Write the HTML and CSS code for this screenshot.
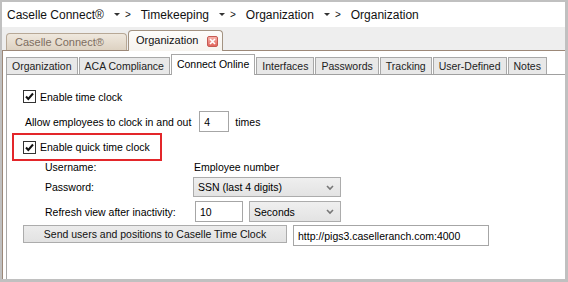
FILE: index.html
```html
<!DOCTYPE html>
<html lang="en">
<head>
    <meta charset="UTF-8">
    <meta name="viewport" content="width=device-width, initial-scale=1.0">
    <title>Organization</title>
    <link rel="stylesheet" href="styles.css">
</head>
<body>
    <div class="frame">
        <div class="crumbs">
            <span class="crumb">Caselle Connect®</span><span class="dd"></span><span class="sep">&gt;</span>
            <span class="crumb">Timekeeping</span><span class="dd"></span><span class="sep">&gt;</span>
            <span class="crumb">Organization</span><span class="dd"></span><span class="sep">&gt;</span>
            <span class="crumb">Organization</span>
        </div>

        <div class="doctabs">
            <div class="doctab">Caselle Connect®</div>
            <div class="doctab active">
                Organization
                <span class="close">
                    <svg width="9" height="9" viewBox="0 0 9 9"><path d="M2 2 L7 7 M7 2 L2 7" stroke="#fff" stroke-width="1.6"/></svg>
                </span>
            </div>
        </div>

        <div class="pane">
            <div class="tabs">
                <div class="tab">Organization</div>
                <div class="tab">ACA Compliance</div>
                <div class="tab active">Connect Online</div>
                <div class="tab">Interfaces</div>
                <div class="tab">Passwords</div>
                <div class="tab">Tracking</div>
                <div class="tab">User-Defined</div>
                <div class="tab">Notes</div>
            </div>

            <div class="page">
                <label class="check-row">
                    <span class="box"><svg width="11" height="11" viewBox="0 0 11 11"><path d="M2 5.5 L4.3 8 L9 2.5" fill="none" stroke="#111" stroke-width="2"/></svg></span>
                    Enable time clock
                </label>

                <div class="count-row">
                    <span>Allow employees to clock in and out</span>
                    <span class="input count">4</span>
                    <span class="times">times</span>
                </div>

                <div class="highlight">
                    <label class="check-row">
                        <span class="box"><svg width="11" height="11" viewBox="0 0 11 11"><path d="M2 5.5 L4.3 8 L9 2.5" fill="none" stroke="#111" stroke-width="2"/></svg></span>
                        Enable quick time clock
                    </label>
                </div>

                <div class="fields">
                    <span class="label">Username:</span>
                    <span class="value">Employee number</span>

                    <span class="label">Password:</span>
                    <span class="select wide">SSN (last 4 digits)<svg class="chev" width="8" height="6" viewBox="0 0 8 6"><path d="M1 1 L4 4 L7 1" fill="none" stroke="#777" stroke-width="1.6"/></svg></span>

                    <span class="label">Refresh view after inactivity:</span>
                    <span class="pair">
                        <span class="input mins">10</span>
                        <span class="select unit">Seconds<svg class="chev" width="8" height="6" viewBox="0 0 8 6"><path d="M1 1 L4 4 L7 1" fill="none" stroke="#777" stroke-width="1.6"/></svg></span>
                    </span>
                </div>

                <div class="send-row">
                    <button class="send">Send users and positions to Caselle Time Clock</button>
                    <span class="input url">http://pigs3.caselleranch.com:4000</span>
                </div>
            </div>
        </div>
    </div>
</body>
</html>
```

FILE: styles.css
```css
* {
    box-sizing: border-box;
    margin: 0;
    padding: 0;
}
body {
    font-family: "Liberation Sans", Arial, sans-serif;
    font-size: 10.5px;
    color: #000;
    background: #fff;
}
.frame {
    width: 568px;
    height: 282px;
    display: flex;
    flex-direction: column;
    border-style: solid;
    border-color: #c0c0c0;
    border-width: 2px 3px 3px 2px;
    background: #fff;
}

/* breadcrumb */
.crumbs {
    height: 25px;
    display: flex;
    align-items: center;
    padding-left: 5px;
    font-size: 12px;
    color: #111;
}
.dd {
    width: 0;
    height: 0;
    margin-left: 10px;
    border-left: 3px solid transparent;
    border-right: 3px solid transparent;
    border-top: 3px solid #333;
}
.sep {
    font-size: 10px;
    margin-left: 5px;
    margin-right: 10px;
}

/* document tabs */
.doctabs {
    height: 24px;
    display: flex;
    align-items: flex-end;
    padding-left: 4px;
    background: #eeeeee;
    border-bottom: 1px solid #9c8878;
}
.doctab {
    width: 121px;
    height: 17px;
    padding-left: 8px;
    font-size: 11px;
    line-height: 16px;
    white-space: nowrap;
    color: #7d6d60;
    border: 1px solid #b7a896;
    border-bottom: none;
    border-radius: 4px 4px 0 0;
    background: linear-gradient(#efe8de, #ddd2c2);
}
.doctab.active {
    position: relative;
    width: 95px;
    height: 21px;
    margin-left: 1px;
    margin-bottom: -1px;
    padding-left: 7px;
    line-height: 19px;
    color: #111;
    border-color: #a39382;
    background: linear-gradient(#fdfcfa, #f6f3ee);
}
.close {
    position: absolute;
    left: 78px;
    top: 5px;
    width: 11px;
    height: 11px;
    display: flex;
    align-items: center;
    justify-content: center;
    border: 1px solid #c65a52;
    border-radius: 2px;
    background: linear-gradient(#f7b2aa, #e2665c);
}

/* inner tab control */
.pane {
    flex: 1;
    display: flex;
    flex-direction: column;
    border-left: 1px solid #9c8878;
    padding-left: 3px;
}
.tabs {
    height: 24px;
    display: flex;
    align-items: flex-end;
    gap: 1px;
    border-bottom: 1px solid #a0a0a0;
}
.tab {
    flex-shrink: 0;
    height: 17px;
    padding: 0 5px;
    line-height: 16px;
    white-space: nowrap;
    color: #222;
    background: #e8e8e8;
    border: 1px solid #a8a8a8;
    border-bottom: none;
}
.tab.active {
    height: 21px;
    margin-bottom: -1px;
    line-height: 18px;
    background: #fff;
    color: #000;
}
.page {
    flex: 1;
    border-left: 1px solid #a8a8a8;
    padding: 15px 0 0 16px;
}

.check-row {
    height: 13px;
    display: flex;
    align-items: center;
    gap: 4px;
}
.box {
    width: 13px;
    height: 13px;
    display: flex;
    align-items: center;
    justify-content: center;
    border: 1px solid #333;
    background: #fff;
}
.count-row {
    margin-top: 8px;
    height: 21px;
    display: flex;
    align-items: center;
    padding-left: 2px;
}
.input {
    display: flex;
    align-items: center;
    height: 21px;
    padding-left: 4px;
    border: 1px solid #a6a6a6;
    background: #fff;
}
.count {
    width: 30px;
    margin-left: 8px;
}
.times {
    margin-left: 6px;
}
.highlight {
    margin-top: 1px;
    margin-left: -11px;
    width: 150px;
    height: 28px;
    padding-left: 9px;
    display: flex;
    align-items: center;
    border: 2px solid #e3262a;
}

.fields {
    margin-top: -1px;
    margin-left: 22px;
    display: grid;
    grid-template-columns: 148px auto;
    grid-template-rows: 13px 20px 21px;
    row-gap: 4px;
    align-items: center;
}
.value {
    padding-left: 1px;
}
.select {
    position: relative;
    display: flex;
    align-items: center;
    height: 20px;
    padding-left: 4px;
    border: 1px solid #acacac;
    background: linear-gradient(#efefef, #e3e3e3);
}
.chev {
    position: absolute;
    right: 6px;
    top: 7px;
}
.wide {
    width: 148px;
}
.pair {
    display: flex;
}
.mins {
    width: 48px;
    margin-left: 2px;
}
.unit {
    width: 92px;
    height: 21px;
    margin-left: 6px;
}

.send-row {
    margin-top: 3px;
    display: flex;
    align-items: flex-start;
}
.send {
    width: 264px;
    height: 18px;
    font-family: inherit;
    font-size: 10.5px;
    color: #111;
    border: 1px solid #acacac;
    background: linear-gradient(#ececec, #e2e2e2);
}
.url {
    width: 196px;
    margin-left: 6px;
}
```
